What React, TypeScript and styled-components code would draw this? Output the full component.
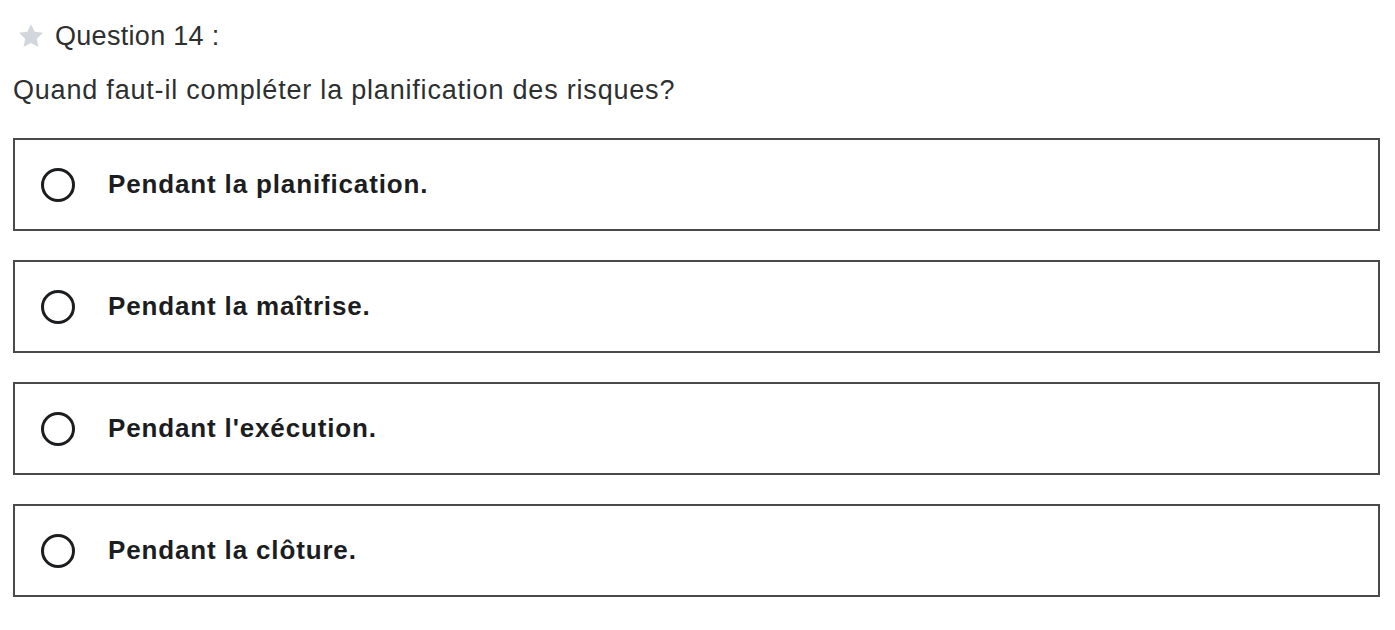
import React from "react";
import styled, { createGlobalStyle } from "styled-components";

const Global = createGlobalStyle`
  html, body { margin: 0; padding: 0; background: #ffffff; }
  body { font-family: "Liberation Sans", Arial, sans-serif; color: #2d2f31; }
`;

const Page = styled.main`
  padding: 18px 15px 0 13px;
  display: flex;
  flex-direction: column;
`;

const Header = styled.div`
  display: flex;
  align-items: center;
  gap: 10px;
  height: 36px;
  padding-left: 4px;
  font-size: 27px;
  letter-spacing: 0.3px;
  color: #2d2f31;
`;

const Prompt = styled.p`
  margin: 18px 0 30px;
  font-size: 27px;
  line-height: 36px;
  letter-spacing: 0.8px;
  color: #2d2f31;
`;

const Options = styled.div`
  display: flex;
  flex-direction: column;
  gap: 29px;
`;

const Option = styled.label`
  box-sizing: border-box;
  height: 93px;
  border: 2px solid #4a4a4a;
  display: flex;
  align-items: center;
  padding-left: 26px;
  gap: 33px;
  cursor: pointer;
`;

const Radio = styled.span`
  box-sizing: border-box;
  width: 34px;
  height: 34px;
  border-radius: 50%;
  border: 3px solid #1c1d1f;
  flex: none;
`;

const OptionText = styled.span`
  font-weight: 700;
  font-size: 26px;
  letter-spacing: 0.85px;
  color: #1c1d1f;
`;

const Star = () => (
  <svg width="28" height="28" viewBox="0 0 24 24" aria-hidden>
    <path
      d="M12 1.8l3.1 6.6 7.2.9-5.3 5 1.4 7.1L12 17.9l-6.4 3.5 1.4-7.1-5.3-5 7.2-.9z"
      fill="#d1d7dc"
    />
  </svg>
);

const answers = [
  "Pendant la planification.",
  "Pendant la maîtrise.",
  "Pendant l'exécution.",
  "Pendant la clôture.",
];

export default function App() {
  return (
    <>
      <Global />
      <Page>
        <Header>
          <Star />
          <span>Question 14 :</span>
        </Header>
        <Prompt>Quand faut-il compléter la planification des risques?</Prompt>
        <Options>
          {answers.map((a) => (
            <Option key={a}>
              <Radio />
              <OptionText>{a}</OptionText>
            </Option>
          ))}
        </Options>
      </Page>
    </>
  );
}
